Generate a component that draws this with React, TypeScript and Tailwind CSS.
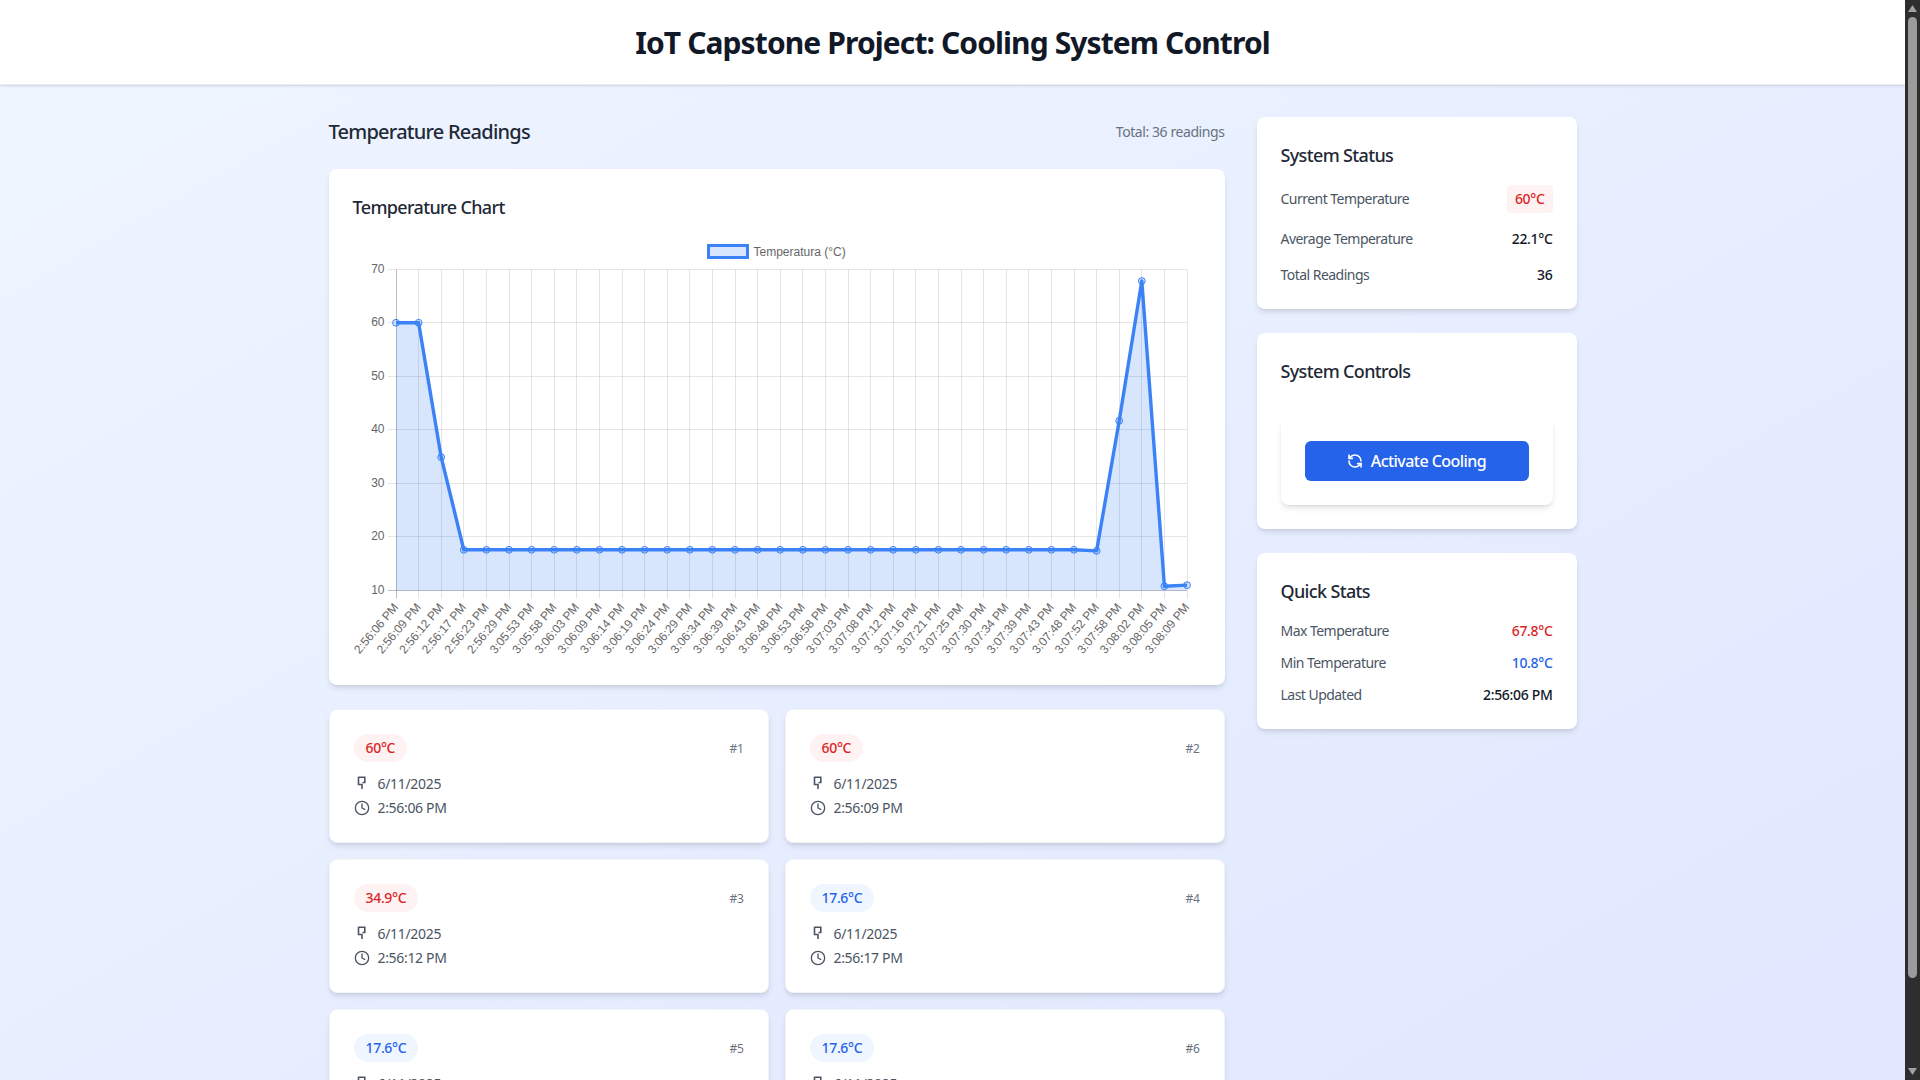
import { Clock, RefreshCcw } from 'lucide-react'

const times = [
  '2:56:06 PM', '2:56:09 PM', '2:56:12 PM', '2:56:17 PM', '2:56:23 PM', '2:56:29 PM',
  '3:05:53 PM', '3:05:58 PM', '3:06:03 PM', '3:06:09 PM', '3:06:14 PM', '3:06:19 PM',
  '3:06:24 PM', '3:06:29 PM', '3:06:34 PM', '3:06:39 PM', '3:06:43 PM', '3:06:48 PM',
  '3:06:53 PM', '3:06:58 PM', '3:07:03 PM', '3:07:08 PM', '3:07:12 PM', '3:07:16 PM',
  '3:07:21 PM', '3:07:25 PM', '3:07:30 PM', '3:07:34 PM', '3:07:39 PM', '3:07:43 PM',
  '3:07:48 PM', '3:07:52 PM', '3:07:58 PM', '3:08:02 PM', '3:08:05 PM', '3:08:09 PM',
]

const temps = times.map((_, i) => {
  const special: Record<number, number> = { 0: 60, 1: 60, 2: 34.9, 31: 17.4, 32: 41.7, 33: 67.8, 34: 10.8, 35: 11 }
  return special[i] ?? 17.6
})

const X0 = 43
const STEP = 22.6
const xAt = (i: number) => X0 + i * STEP
const yAt = (v: number) => 353.5 - (v - 10) * 5.355
// grid lines sit on whole pixels, like the canvas draws them
const snap = (n: number) => Math.floor(n) + 0.5

function TemperatureChart() {
  const line = temps.map((t, i) => `${xAt(i)},${yAt(t)}`).join(' ')
  const area = `${X0},${yAt(10)} ${line} ${xAt(35)},${yAt(10)}`
  return (
    <svg width="848" height="424" className="block tracking-normal overflow-visible">
      <rect x="355.5" y="8.5" width="39" height="12" fill="#3b82f633" stroke="#3b82f6" strokeWidth="3" />
      <text x="400.5" y="19" fontSize="12" fill="#666" fontFamily="'Liberation Sans', sans-serif">Temperatura (°C)</text>

      {[10, 20, 30, 40, 50, 60, 70].map(v => (
        <g key={v}>
          <line x1={X0 - 8} x2={xAt(35)} y1={snap(yAt(v))} y2={snap(yAt(v))} stroke={v === 10 ? '#00000040' : '#0000001a'} />
          <text x="31.5" y={yAt(v) + 3.3} textAnchor="end" fontSize="12" fill="#666" fontFamily="'Liberation Sans', sans-serif">{v}</text>
        </g>
      ))}
      {times.map((t, i) => (
        <g key={t}>
          <line x1={snap(xAt(i))} x2={snap(xAt(i))} y1={snap(yAt(70))} y2={yAt(10) + 8} stroke={i === 0 ? '#00000040' : '#0000001a'} />
          <text
            transform={`translate(${xAt(i) + 3} 370.5) rotate(-50)`}
            textAnchor="end"
            fontSize="12"
            fill="#666"
            fontFamily="'Liberation Sans', sans-serif"
          >
            {t}
          </text>
        </g>
      ))}

      <polygon points={area} fill="#3b82f633" />
      <polyline points={line} fill="none" stroke="#3b82f6" strokeWidth="3.4" strokeLinejoin="round" />
      {temps.map((t, i) => (
        <circle key={i} cx={xAt(i)} cy={yAt(t)} r="3.4" fill="#3b82f633" stroke="#3b82f6" />
      ))}
    </svg>
  )
}

function DateGlyph() {
  return (
    <svg width="16" height="16" viewBox="0 0 16 16" fill="none" stroke="#4b5563" strokeWidth="1.6" className="mr-2 shrink-0">
      <path d="M4.5 0.8V8.5H8V13M4.5 1.2H10.8V6.5H8.5" />
    </svg>
  )
}

function ReadingCard({ n, time, temp }: { n: number; time: string; temp: number }) {
  const hot = temp >= 30
  return (
    <div className="bg-white rounded-lg border border-[#f3f4f6] shadow-md p-6">
      <div className="flex items-center justify-between mb-3">
        <span className={`px-3 py-1 rounded-full text-sm font-medium ${hot ? 'bg-[#fef2f2] text-[#dc2626]' : 'bg-[#eff6ff] text-[#2563eb]'}`}>
          {temp}°C
        </span>
        <span className="text-xs text-[#6b7280] pt-[2px]">#{n}</span>
      </div>
      <div className="flex flex-col gap-1 text-sm text-[#4b5563]">
        <div className="flex items-center">
          <DateGlyph />
          <span>6/11/2025</span>
        </div>
        <div className="flex items-center">
          <Clock size={16} className="mr-2 shrink-0" />
          <span>{time}</span>
        </div>
      </div>
    </div>
  )
}

function Row({ label, value, color = 'text-[#111827]' }: { label: string; value: string; color?: string }) {
  return (
    <div className="flex items-center justify-between text-sm">
      <span className="text-[#4b5563] tracking-[-0.038em]">{label}</span>
      <span className={`font-medium ${color}`}>{value}</span>
    </div>
  )
}

function Scrollbar() {
  return (
    <div className="w-[15px] shrink-0 bg-[#2e2e2e] flex flex-col items-center">
      <svg width="9" height="7" viewBox="0 0 9 7" className="mt-[5px] mb-[5px] shrink-0">
        <path d="M4.5 0L9 7H0z" fill="#a0a0a0" />
      </svg>
      <div className="w-[9px] h-[961px] bg-[#9b9b9b] rounded-t-[5px] rounded-b-[5px]" />
      <div className="flex-1" />
      <svg width="9" height="7" viewBox="0 0 9 7" className="mb-[5px] shrink-0">
        <path d="M0 0H9L4.5 7z" fill="#a0a0a0" />
      </svg>
    </div>
  )
}

export default function App() {
  return (
    <div className="flex h-screen overflow-hidden font-['Noto_Sans',sans-serif] tracking-[-0.02em]">
      <div className="flex-1 min-w-0 overflow-hidden bg-gradient-to-br from-[#eff6ff] to-[#e0e7ff]">
        <header className="bg-white border-b border-[#eceef3] shadow-sm pt-[25px] pb-[23px]">
          <h1 className="text-3xl font-bold text-center text-[#111827] tracking-[-0.03em]">IoT Capstone Project: Cooling System Control</h1>
        </header>

        <main className="max-w-7xl mx-auto px-4 py-8 flex gap-8 items-start">
          <section className="w-[896px] shrink-0">
            <div className="flex items-center justify-between pt-px mb-[23px]">
              <h2 className="text-xl font-medium text-[#1f2937] tracking-[-0.038em]">Temperature Readings</h2>
              <span className="text-sm text-[#6b7280] tracking-[-0.03em]">Total: 36 readings</span>
            </div>

            <div className="bg-white rounded-lg shadow-md p-6 mb-6">
              <h3 className="text-lg font-medium text-[#1f2937] mb-4 tracking-[-0.036em]">Temperature Chart</h3>
              <TemperatureChart />
            </div>

            <div className="grid grid-cols-2 gap-4">
              {times.slice(0, 6).map((t, i) => (
                <ReadingCard key={t} n={i + 1} time={t} temp={i > 3 ? 17.6 : temps[i]} />
              ))}
            </div>
          </section>

          <aside className="w-[320px] shrink-0 flex flex-col gap-6">
            <div className="bg-white rounded-lg shadow-md p-6">
              <h3 className="text-lg font-medium text-[#1f2937] mb-4 tracking-[-0.036em]">System Status</h3>
              <div className="flex flex-col gap-4">
                <div className="flex items-center justify-between text-sm">
                  <span className="text-[#4b5563] tracking-[-0.038em]">Current Temperature</span>
                  <span className="px-2 py-1 rounded bg-[#fef2f2] text-[#dc2626] font-medium">60°C</span>
                </div>
                <Row label="Average Temperature" value="22.1°C" />
                <Row label="Total Readings" value="36" />
              </div>
            </div>

            <div className="bg-white rounded-lg shadow-md p-6">
              <h3 className="text-lg font-medium text-[#1f2937] mb-8 tracking-[-0.036em]">System Controls</h3>
              <div className="bg-white rounded-lg shadow-md p-6">
                <button className="w-full h-10 rounded-md bg-[#2563eb] text-white font-medium tracking-[-0.034em] flex items-center justify-center gap-2">
                  <RefreshCcw size={16} strokeWidth={2.4} />
                  Activate Cooling
                </button>
              </div>
            </div>

            <div className="bg-white rounded-lg shadow-md p-6">
              <h3 className="text-lg font-medium text-[#1f2937] mb-4 tracking-[-0.036em]">Quick Stats</h3>
              <div className="flex flex-col gap-3">
                <Row label="Max Temperature" value="67.8°C" color="text-[#dc2626]" />
                <Row label="Min Temperature" value="10.8°C" color="text-[#2563eb]" />
                <Row label="Last Updated" value="2:56:06 PM" />
              </div>
            </div>
          </aside>
        </main>
      </div>
      <Scrollbar />
    </div>
  )
}
